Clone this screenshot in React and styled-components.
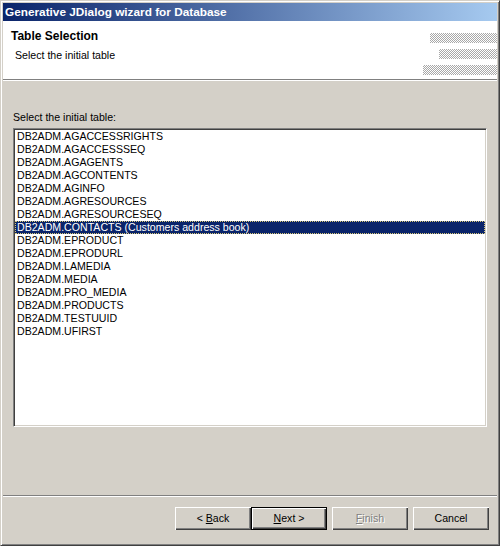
import React from "react";
import styled, { createGlobalStyle, css } from "styled-components";

const GlobalStyle = createGlobalStyle`
  html, body { margin: 0; padding: 0; background: #d4d0c8; overflow: hidden; }
  * { box-sizing: border-box; }
`;

const Window = styled.div`
  width: 500px;
  height: 546px;
  border: 1px solid;
  border-color: #d4d0c8 #404040 #404040 #d4d0c8;
  box-shadow: inset 1px 1px #ffffff, inset -1px -1px #808080;
  padding: 2px;
  background: #d4d0c8;
  display: flex;
  flex-direction: column;
  font-family: "Liberation Sans", Arial, sans-serif;
  font-size: 10.6px;
  color: #000;
`;

const TitleBar = styled.div`
  height: 18px;
  flex: none;
  display: flex;
  align-items: center;
  padding-left: 2px;
  background: linear-gradient(to right, #0a246a, #a6caf0);
  color: #fff;
  font-weight: bold;
  font-size: 11.8px;
  white-space: nowrap;
`;

const Header = styled.div`
  height: 59px;
  flex: none;
  background: #fff;
  border-bottom: 1px solid #808080;
  box-shadow: 0 1px #ffffff;
  display: flex;
  justify-content: space-between;
`;

const HeaderText = styled.div`
  display: flex;
  flex-direction: column;
  padding: 9px 0 0 8px;
`;

const PageTitle = styled.div`
  font-weight: bold;
  font-size: 12px;
  line-height: 13px;
`;

const PageDesc = styled.div`
  line-height: 13px;
  margin: 6px 0 0 4px;
`;

const Banner = styled.div`
  display: flex;
  flex-direction: column;
  align-items: flex-end;
  gap: 6px;
  padding-top: 12px;
`;

const Dither = styled.div`
  width: ${(p) => p.$w}px;
  height: ${(p) => p.$h}px;
  background: repeating-conic-gradient(#a8a8a8 0 25%, #ffffff 0 50%);
  background-size: 2px 2px;
`;

const Body = styled.div`
  flex: 1;
  display: flex;
  flex-direction: column;
  padding: 30px 10px 0 10px;
  margin-top: 1px;
`;

const Label = styled.div`
  line-height: 13px;
  margin-bottom: 4px;
`;

const ListBox = styled.div`
  height: 299px;
  background: #fff;
  border: 1px solid;
  border-color: #808080 #ffffff #ffffff #808080;
  box-shadow: inset 1px 1px #404040, inset -1px -1px #d4d0c8;
  padding: 1px;
  display: flex;
  flex-direction: column;
`;

const Item = styled.div`
  height: 13px;
  line-height: 13px;
  padding-left: 2px;
  white-space: nowrap;
  ${(p) =>
    p.$selected &&
    css`
      background: #0a246a;
      color: #fff;
      outline: 1px dotted #d8c878;
      outline-offset: -1px;
    `}
`;

const Separator = styled.div`
  flex: none;
  height: 2px;
  border-top: 1px solid #808080;
  border-bottom: 1px solid #ffffff;
`;

const ButtonRow = styled.div`
  flex: none;
  height: 46px;
  display: flex;
  justify-content: flex-end;
  align-items: flex-start;
  padding: 10px 8px 0 0;
`;

const Group = styled.div`
  display: flex;
`;

const Button = styled.div`
  width: 76px;
  height: 23px;
  margin-left: ${(p) => (p.$gap ? 5 : 0)}px;
  background: #d4d0c8;
  display: flex;
  align-items: center;
  justify-content: center;
  line-height: 13px;
  white-space: pre;
  color: ${(p) => (p.$disabled ? "#808080" : "#000")};
  text-shadow: ${(p) => (p.$disabled ? "1px 1px #ffffff" : "none")};
  box-shadow: inset 1px 1px #ffffff, inset -1px -1px #404040,
    inset -2px -2px #808080;
  ${(p) =>
    p.$default &&
    css`
      border: 1px solid #000;
    `}
  u { text-decoration: underline; text-underline-offset: 1px; }
`;

const tables = [
  "DB2ADM.AGACCESSRIGHTS",
  "DB2ADM.AGACCESSSEQ",
  "DB2ADM.AGAGENTS",
  "DB2ADM.AGCONTENTS",
  "DB2ADM.AGINFO",
  "DB2ADM.AGRESOURCES",
  "DB2ADM.AGRESOURCESEQ",
  "DB2ADM.CONTACTS (Customers address book)",
  "DB2ADM.EPRODUCT",
  "DB2ADM.EPRODURL",
  "DB2ADM.LAMEDIA",
  "DB2ADM.MEDIA",
  "DB2ADM.PRO_MEDIA",
  "DB2ADM.PRODUCTS",
  "DB2ADM.TESTUUID",
  "DB2ADM.UFIRST",
];

export default function App() {
  return (
    <>
      <GlobalStyle />
      <Window>
        <TitleBar>Generative JDialog wizard for Database</TitleBar>
        <Header>
          <HeaderText>
            <PageTitle>Table Selection</PageTitle>
            <PageDesc>Select the initial table</PageDesc>
          </HeaderText>
          <Banner>
            <Dither $w={67} $h={10} />
            <Dither $w={58} $h={10} />
            <Dither $w={74} $h={10} />
          </Banner>
        </Header>
        <Body>
          <Label>Select the initial table:</Label>
          <ListBox>
            {tables.map((t, i) => (
              <Item key={t} $selected={i === 7}>
                {t}
              </Item>
            ))}
          </ListBox>
        </Body>
        <Separator />
        <ButtonRow>
          <Group>
            <Button>
              {"< "}
              <u>B</u>
              {"ack"}
            </Button>
            <Button $default>
              <u>N</u>
              {"ext >"}
            </Button>
          </Group>
          <Button $gap $disabled>
            <u>F</u>
            {"inish"}
          </Button>
          <Button $gap>Cancel</Button>
        </ButtonRow>
      </Window>
    </>
  );
}
